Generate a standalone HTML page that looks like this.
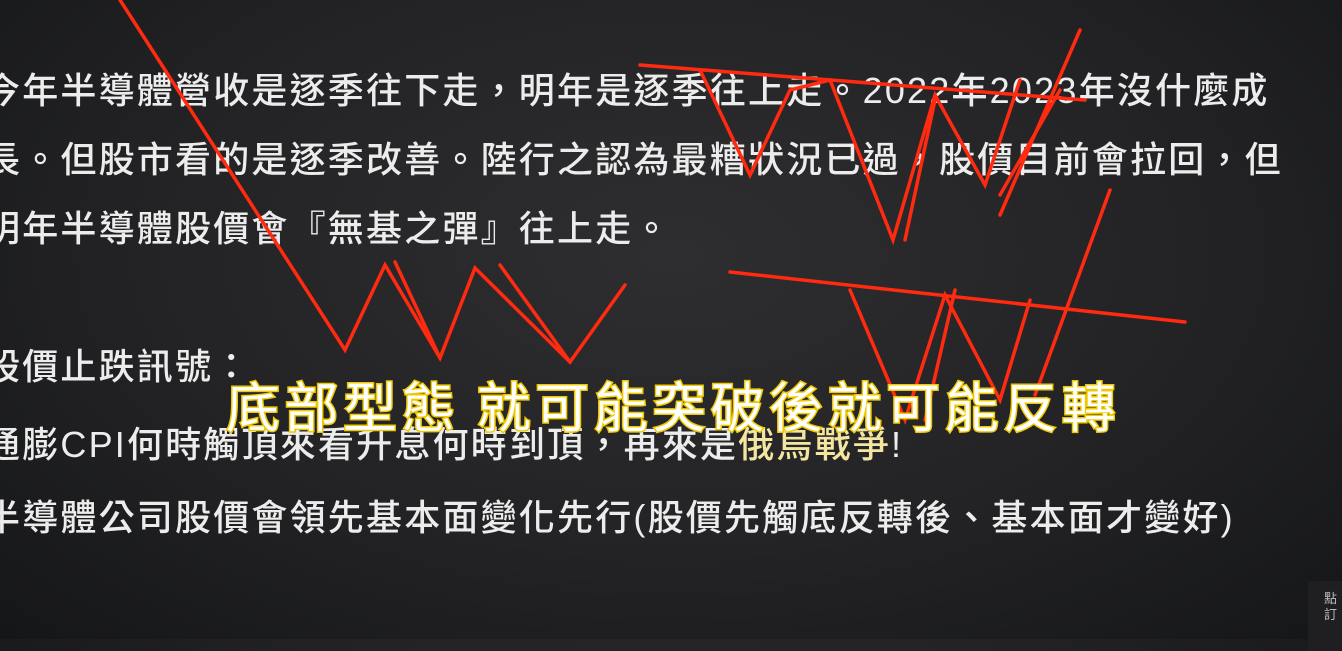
<!DOCTYPE html>
<html><head><meta charset="utf-8"><style>
html,body{margin:0;padding:0}
body{width:1342px;height:639px;overflow:hidden;position:relative;background:radial-gradient(ellipse at 50% 40%,#2e2e30 0%,#232325 55%,#151618 100%);font-family:"Liberation Sans","Noto Sans CJK TC",sans-serif}
.t{position:absolute;color:#ececec;font-size:36px;white-space:nowrap;font-weight:500;letter-spacing:2.2px}
.sub{position:absolute;left:226px;top:364px;font-size:54px;color:#fff;white-space:nowrap;-webkit-text-stroke:3px #f0c800;paint-order:stroke fill;font-family:"Noto Sans CJK TC",sans-serif;letter-spacing:4.5px}
.box{position:absolute;left:1308px;top:581px;width:40px;height:60px;background:#1f1f21;color:#bbb;font-size:13px;line-height:16px;padding:10px 0 0 16px}
svg{position:absolute;left:0;top:0}
</style></head><body>
<div class="t" style="left:-16px;top:62px">今年半導體營收是逐季往下走，明年是逐季往上走。2022年2023年沒什麼成</div>
<div class="t" style="left:-16px;top:131px">長。但股市看的是逐季改善。陸行之認為最糟狀況已過，股價目前會拉回，但</div>
<div class="t" style="left:-16px;top:200px">明年半導體股價會『無基之彈』往上走。</div>
<div class="t" style="left:-16px;top:338px">股價止跌訊號：</div>
<div class="t" style="left:-16px;top:416px">通膨CPI何時觸頂來看升息何時到頂，再來是<span style="color:#f4e6a0">俄烏戰爭</span>!</div>
<div class="t" style="left:-16px;top:489px">半導體公司股價會領先基本面變化先行(股價先觸底反轉後、基本面才變好)</div>
<svg width="1342" height="639" fill="none" stroke="#ff2a10" stroke-width="3.5" stroke-linecap="round">
<polyline points="120,0 345,350 385,265 440,358 475,268 570,362 625,285"/>
<polyline points="395,262 440,358"/>
<polyline points="500,265 570,362"/>
<polyline points="640,65 1085,100"/>
<polyline points="700,70 750,175 790,90 830,80 893,240 935,95 985,185 1020,80"/>
<polyline points="905,240 935,100"/>
<polyline points="1000,215 1080,30"/>
<polyline points="1000,195 1060,90"/>
<polyline points="730,272 1185,322"/>
<polyline points="850,290 905,420 945,295 1000,400 1030,300"/>
<polyline points="1035,395 1110,190"/>
<polyline points="925,420 955,290"/>
</svg>
<div class="sub">底部型態 就可能突破後就可能反轉</div>
<div class="box">點<br>訂</div>
</body></html>
